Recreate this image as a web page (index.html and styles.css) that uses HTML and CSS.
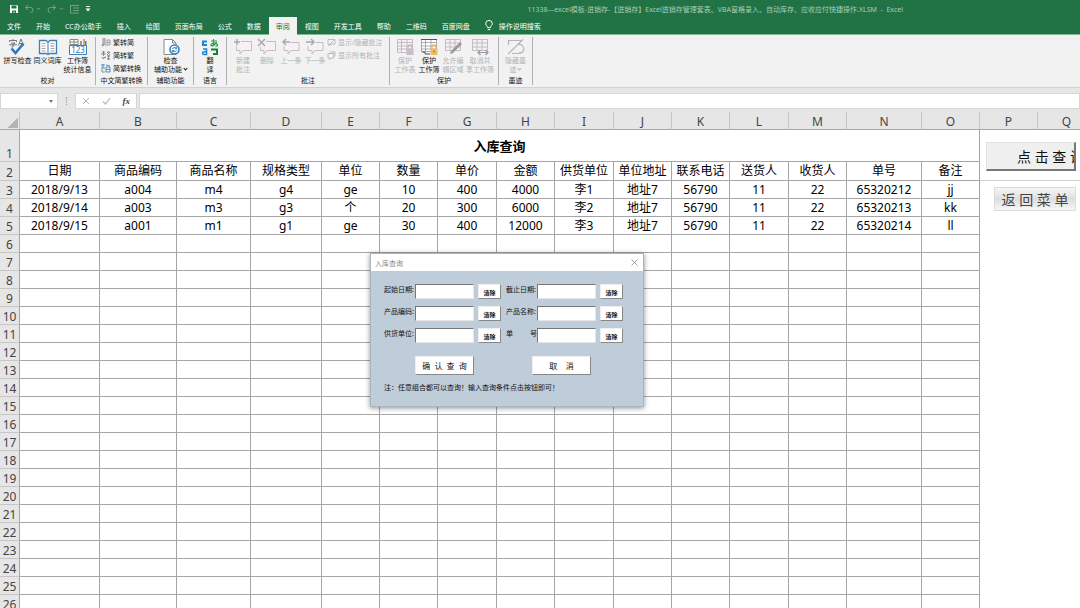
FILE: index.html
```html
<!DOCTYPE html>
<html lang="zh-CN">
<head>
    <meta charset="utf-8">
    <link rel="stylesheet" href="styles.css">
    <title>入库查询 - Excel</title>
</head>
<body>

    <header class="titlebar">
      <div class="quick">
        <button aria-label="保存"><svg width="10" height="10" viewBox="0 0 10 10"><path d="M1 1h7l1 1v7H1z" fill="#fff"/><path d="M2.5 1.5h5v3h-5zM3 6.5h4V9H5.500V7.500H4.500V9H3z" fill="#217346"/></svg></button>
        <button class="faded" aria-label="撤消"><svg width="18" height="10" viewBox="0 0 18 10"><path d="M4 1L1.500 3.500 4 6M1.500 3.500h5a2.500 2.500 0 0 1 0 5M13 4l1.500 1.500L16 4" fill="none" stroke="#fff"/></svg></button>
        <button class="faded" aria-label="恢复"><svg width="18" height="10" viewBox="0 0 18 10"><path d="M6 1l2.500 2.500L6 6M8.500 3.500h-5a2.500 2.500 0 0 0 0 5M13 4l1.500 1.500L16 4" fill="none" stroke="#fff"/></svg></button>
        <button class="faded" aria-label="窗体"><svg width="10" height="10" viewBox="0 0 10 10"><path d="M0 1.500h9M3 4h6M3 6.500h6M0 9h9M.5 1v8" fill="none" stroke="#fff"/></svg></button>
        <button aria-label="自定义快速访问工具栏"><svg width="6" height="8" viewBox="0 0 6 8"><path d="M1 1.500h4" stroke="#fff"/><path d="M.5 3.500h5L3 6.500z" fill="#fff"/></svg></button>
      </div>
      <div class="filename">11338---excel模板-进销存-【进销存】Excel进销存管理套表、VBA窗格录入、自动库存、应收应付快捷操作.XLSM&nbsp; -&nbsp; Excel</div>
    </header>

    <nav class="tabs">
      <button class="tab file">文件</button>
      <button class="tab">开始</button>
      <button class="tab">CC办公助手</button>
      <button class="tab">插入</button>
      <button class="tab">绘图</button>
      <button class="tab">页面布局</button>
      <button class="tab">公式</button>
      <button class="tab">数据</button>
      <button class="tab active">审阅</button>
      <button class="tab">视图</button>
      <button class="tab">开发工具</button>
      <button class="tab">帮助</button>
      <button class="tab">二维码</button>
      <button class="tab">百度网盘</button>
      <button class="tab tell">
        <svg width="8" height="11" viewBox="0 0 8 11"><path d="M2.500 7.500C2.500 6 .7 5.500.7 3.700a3.300 3.300 0 0 1 6.600 0C7.300 5.500 5.500 6 5.500 7.500zM2.700 9.500h2.600" fill="none" stroke="#fff"/></svg>
        操作说明搜索
      </button>
    </nav>

    <section class="ribbon">
      <div class="group proofing">
        <div class="tools">
          <button class="tool">
            <svg width="20" height="18" viewBox="0 0 20 18"><path d="M1.500 4V2.500h7V4M5 1v1M3 5h4L5 6.500V9H3.500M1 6.800h8M10.500 7.500L13 1l2.500 6.500M11.500 5.500h3" fill="none" stroke="#666" stroke-width=".9"/><path d="M3.500 10.500l4 4.500 8-9.500" fill="none" stroke="#2f78b9" stroke-width="2.600"/></svg>
            拼写检查
          </button>
          <button class="tool">
            <svg width="20" height="18" viewBox="0 0 20 18"><path d="M1.500 2.500H8l2 1.500 2-1.500h6.500v13H12l-2 1-2-1H1.500z" fill="#fff" stroke="#3c7fba" stroke-width="1.300"/><path d="M10 4v12" stroke="#3c7fba"/><path d="M3.500 5.500h4M3.500 8h4M3.500 10.500h4M3.500 13h4M12.500 5.500h4M12.500 8h4M12.500 10.500h4M12.500 13h4" stroke="#aaa"/><path d="M12.500 8h3" stroke="#e3a28c"/></svg>
            同义词库
          </button>
          <button class="tool">
            <svg width="20" height="18" viewBox="0 0 20 18"><path d="M2 1.500h8v5H2zM2 4h8M6 1.500v5" fill="#fff" stroke="#888"/><path d="M12 3h2v4h-2z" fill="#999"/><path d="M15 1h2v6h-2z" fill="#e3a45d"/><path d="M17 3h1.500v4H17z" fill="#3c7fba"/><path d="M1.500 7.500h17v9h-17z" fill="#fff" stroke="#3c7fba"/><text x="10" y="15" text-anchor="middle" class="icon-text">123</text></svg>
            工作簿<br>统计信息
          </button>
        </div>
        <div class="group-name">校对</div>
      </div>

      <div class="group chinese">
        <div class="lines">
          <button class="line"><svg width="10" height="9" viewBox="0 0 10 9"><path d="M1 1h4M1 3h4M3 0v7M1 5h4M1 8l1-2M5 8L4 6M6 2h3v5H6zM6 4.500h3" fill="none" stroke="#888" stroke-width=".8"/><path d="M1 8l2-1.500" stroke="#2f78b9"/></svg>繁转简</button>
          <button class="line"><svg width="10" height="9" viewBox="0 0 10 9"><path d="M1 1h3M0 3h5M2.500 0v5M6 1h3L6 4M6 1l3 3M6 5h3M7.500 4v4" fill="none" stroke="#777" stroke-width=".8"/><path d="M1 6l1 1.500L5 6M6 8h3" fill="none" stroke="#2f78b9"/></svg>简转繁</button>
          <button class="line"><svg width="10" height="9" viewBox="0 0 10 9"><path d="M0 1h4M2 0v4M0 4h4M5 3h4v5H5zM5 5.500h4M5 1l4 1" fill="none" stroke="#2f78b9" stroke-width=".8"/><path d="M1 5v3h3" fill="none" stroke="#888"/></svg>简繁转换</button>
        </div>
        <div class="group-name">中文简繁转换</div>
      </div>

      <div class="group access">
        <div class="tools">
          <button class="tool">
            <svg width="20" height="18" viewBox="0 0 20 18"><path d="M3 1.500h8.500L15 5v11.500H3z" fill="#fff" stroke="#888"/><path d="M11.500 1.500V5H15" fill="none" stroke="#888"/><circle cx="13.500" cy="11.500" r="4.500" fill="#fff" stroke="#3c7fba" stroke-width="1.600"/><path d="M11.500 11a2.200 2.200 0 0 1 4-.5M15.500 12.300a2.200 2.200 0 0 1-4 .3M15.700 8.800v2h-2M11.300 14.500v-2h2" fill="none" stroke="#3c7fba"/></svg>
            检查<br>辅助功能 <span class="caret"></span>
          </button>
        </div>
        <div class="group-name">辅助功能</div>
      </div>

      <div class="group language">
        <div class="tools">
          <button class="tool">
            <svg width="20" height="18" viewBox="0 0 20 18"><path d="M7 3.500H3v3.500h4" fill="none" stroke="#1e88d0" stroke-width="2"/><path d="M11 3h6M13.500 1v6.500M16.500 4c-1 3-5 5-5.500 3S18 4 17.500 7.500L15.500 8.500" fill="none" stroke="#22a33b" stroke-width="1.200"/><path d="M3 11h3.500v5.500H4a1.400 1.400 0 0 1 0-2.800h2.500" fill="none" stroke="#1e88d0" stroke-width="1.600"/><path d="M11 11.500h6V16h-4" fill="none" stroke="#15803a" stroke-width="2"/></svg>
            翻<br>译
          </button>
        </div>
        <div class="group-name">语言</div>
      </div>

      <div class="group comments">
        <div class="tools">
          <button class="tool" disabled>
            <svg width="20" height="18" viewBox="0 0 20 18"><path d="M8 3.500h10.500v9H10L7 16v-3.500H3.500V8" fill="#f7f0f7" stroke="#c4bcc4"/><path d="M1 4h6M4 1v6" stroke="#aaa" stroke-width="1.500"/></svg>
            新建<br>批注
          </button>
          <button class="tool" disabled>
            <svg width="20" height="18" viewBox="0 0 20 18"><path d="M9 3.500h9.500v9H10L7 16v-3.500H3.500V9" fill="#f7f0f7" stroke="#c4bcc4"/><path d="M1 1l7 7M8 1L1 8" stroke="#aaa" stroke-width="1.500"/></svg>
            删除
          </button>
          <button class="tool" disabled>
            <svg width="20" height="18" viewBox="0 0 20 18"><path d="M9.500 4.500h8.500v8H10L7 16v-3.500H3V8" fill="#f7f0f7" stroke="#c4bcc4"/><path d="M9 4H2M5 1L2 4l3 3" fill="none" stroke="#aaa" stroke-width="1.500"/></svg>
            上一条
          </button>
          <button class="tool" disabled>
            <svg width="20" height="18" viewBox="0 0 20 18"><path d="M10.500 4.500H18v8h-8L7 16v-3.500H3V8" fill="#f7f0f7" stroke="#c4bcc4"/><path d="M1 4h8M6 1l3 3-3 3" fill="none" stroke="#aaa" stroke-width="1.500"/></svg>
            下一条
          </button>
          <div class="lines">
            <button class="line" disabled><svg width="9" height="9" viewBox="0 0 9 9"><path d="M1 1.500h7V6H4L2 8V6H1zM2 7l5-5" fill="none" stroke="#bbb"/></svg>显示/隐藏批注</button>
            <button class="line" disabled><svg width="9" height="9" viewBox="0 0 9 9"><path d="M1 2.500h5.500V7H4L2.500 8.500V7H1zM3 1h5v4.500" fill="none" stroke="#bbb"/></svg>显示所有批注</button>
          </div>
        </div>
        <div class="group-name">批注</div>
      </div>

      <div class="group protect">
        <div class="tools">
          <button class="tool" disabled>
            <svg width="20" height="18" viewBox="0 0 20 18"><path d="M2.500 1.500h15v13h-15zM2.500 4.500h15M2.500 8h15M2.500 11h15M6.500 1.500v13M12 1.500v13" fill="#f7f0f7" stroke="#c4bcc4"/><path d="M13 11V9a2 2 0 0 1 4 0v2" fill="none" stroke="#bbb" stroke-width="1.300"/><path d="M11.500 10.500h7V17h-7z" fill="#c4c0c4"/></svg>
            保护<br>工作表
          </button>
          <button class="tool">
            <svg width="20" height="18" viewBox="0 0 20 18"><path d="M2.500 1.500h15v12h-15zM2.500 4.500h15M2.500 8h15M2.500 11h15M6.500 1.500v12M12 1.500v12" fill="#fff" stroke="#aaa"/><path d="M2 1.500h16M3 14h3v2h5" fill="none" stroke="#555"/><path d="M13 11V9a2 2 0 0 1 4 0v2" fill="none" stroke="#e8b461" stroke-width="1.300"/><path d="M11.500 10.500h7V17h-7z" fill="#efbc68"/><path d="M15 12v3" stroke="#a87b35"/></svg>
            保护<br>工作簿
          </button>
          <button class="tool" disabled>
            <svg width="20" height="18" viewBox="0 0 20 18"><path d="M2.500 1.500h15v11h-15zM2.500 5h15M2.500 9h15M7 1.500v11M12 1.500v11" fill="#f7f0f7" stroke="#c4bcc4"/><path d="M7 16l1-3 9-9 2 2-9 9z" fill="#999"/></svg>
            允许编<br>辑区域
          </button>
          <button class="tool wide" disabled>
            <svg width="20" height="18" viewBox="0 0 20 18"><path d="M2.500 1.500h15v11h-15zM2.500 5h15M2.500 9h15M7 1.500v11M12 1.500v11" fill="#f7f0f7" stroke="#c4bcc4"/><path d="M8 14.500h10M10.500 12L8 14.500l2.500 2.500M15.500 12l2.500 2.500-2.500 2.500" fill="none" stroke="#999" stroke-width="1.200"/></svg>
            取消共<br>享工作簿
          </button>
        </div>
        <div class="group-name">保护</div>
      </div>

      <div class="group ink">
        <div class="tools">
          <button class="tool" disabled>
            <svg width="20" height="18" viewBox="0 0 20 18"><path d="M2.500 7V2.500H16M2 16L17 1.500M6 15.500h6c5 0 7-4 5-7-1-2-3-2.500-5-2" fill="none" stroke="#b8b4b8" stroke-width="1.200"/></svg>
            隐藏墨<br>迹 <span class="caret"></span>
          </button>
        </div>
        <div class="group-name">墨迹</div>
      </div>
    </section>

    <div class="formula-bar">
      <div class="name-box"><input type="text" aria-label="名称框"><span class="arrow"></span></div>
      <span class="dots"></span>
      <div class="fx">
        <button aria-label="取消"><svg width="8" height="8" viewBox="0 0 8 8"><path d="M1 1l6 6M7 1L1 7" stroke="#b5b5b5"/></svg></button>
        <button aria-label="输入"><svg width="9" height="8" viewBox="0 0 9 8"><path d="M1 4.500L3.500 7 8 1" fill="none" stroke="#b5b5b5" stroke-width="1.200"/></svg></button>
        <button class="fx-label" aria-label="插入函数">fx</button>
      </div>
      <input class="formula" type="text" aria-label="编辑栏">
    </div>

    <main class="workbook">
      <table class="sheet">
        <colgroup>
          <col class="c-num"><col class="c-date"><col class="c-code"><col class="c-name"><col class="c-spec">
          <col class="c"><col class="c"><col class="c-wide"><col class="c"><col class="c-wide"><col class="c"><col class="c"><col class="c-wide"><col class="c">
          <col class="c-no"><col class="c"><col class="c"><col class="c">
        </colgroup>
        <thead>
          <tr><th class="corner"></th><th>A</th><th>B</th><th>C</th><th>D</th><th>E</th><th>F</th><th>G</th><th>H</th><th>I</th><th>J</th><th>K</th><th>L</th><th>M</th><th>N</th><th>O</th><th>P</th><th>Q</th></tr>
        </thead>
        <tbody id="rows">
          <tr class="title-row"><th>1</th><td colspan="15">入库查询</td><td class="out" colspan="2"></td></tr>
          <tr class="head-row"><th>2</th><td>日期</td><td>商品编码</td><td>商品名称</td><td>规格类型</td><td>单位</td><td>数量</td><td>单价</td><td>金额</td><td>供货单位</td><td>单位地址</td><td>联系电话</td><td>送货人</td><td>收货人</td><td>单号</td><td>备注</td><td class="out line-under" colspan="2"></td></tr>
          <tr><th>3</th><td>2018/9/13</td><td>a004</td><td>m4</td><td>g4</td><td>ge</td><td>10</td><td>400</td><td>4000</td><td>李1</td><td>地址7</td><td>56790</td><td>11</td><td>22</td><td>65320212</td><td>jj</td><td class="out" colspan="2"></td></tr>
          <tr><th>4</th><td>2018/9/14</td><td>a003</td><td>m3</td><td>g3</td><td>个</td><td>20</td><td>300</td><td>6000</td><td>李2</td><td>地址7</td><td>56790</td><td>11</td><td>22</td><td>65320213</td><td>kk</td><td class="out" colspan="2"></td></tr>
          <tr><th>5</th><td>2018/9/15</td><td>a001</td><td>m1</td><td>g1</td><td>ge</td><td>30</td><td>400</td><td>12000</td><td>李3</td><td>地址7</td><td>56790</td><td>11</td><td>22</td><td>65320214</td><td>ll</td><td class="out" colspan="2"></td></tr>
        </tbody>
      </table>

      <button class="sheet-btn query">点 击 查 询</button>
      <button class="sheet-btn back">返 回 菜 单</button>

      <form class="dialog" onsubmit="return false">
        <div class="dialog-title">
          <span>入库查询</span>
          <button type="button" aria-label="关闭"><svg width="7" height="7" viewBox="0 0 7 7"><path d="M.5.5l6 6M6.500.5l-6 6" stroke="#888" stroke-width=".8"/></svg></button>
        </div>
        <div class="dialog-body">
          <div class="fields">
            <div class="field"><label for="from">起始日期:</label><input id="from" type="text"><button type="button">清除</button></div>
            <div class="field"><label for="to">截止日期:</label><input id="to" type="text"><button type="button">清除</button></div>
            <div class="field"><label for="code">产品编码:</label><input id="code" type="text"><button type="button">清除</button></div>
            <div class="field"><label for="name">产品名称:</label><input id="name" type="text"><button type="button">清除</button></div>
            <div class="field"><label for="supplier">供货单位:</label><input id="supplier" type="text"><button type="button">清除</button></div>
            <div class="field"><label class="spread" for="number"><span>单</span><span>号</span></label><input id="number" type="text"><button type="button">清除</button></div>
          </div>
          <div class="actions">
            <button type="submit">确&nbsp; 认&nbsp; 查&nbsp; 询</button>
            <button type="button">取&nbsp;&nbsp;&nbsp; 消</button>
          </div>
          <p class="note">注：任意组合都可以查询！输入查询条件点击按钮即可！</p>
        </div>
      </form>
    </main>

    <script>
      // empty rows under the data
      const rows = document.getElementById("rows");
      for (let n = 6; n <= 26; n++) {
        const tr = document.createElement("tr");
        tr.innerHTML = "<th>" + n + "</th>" + "<td></td>".repeat(15) + '<td class="out" colspan="2"></td>';
        rows.appendChild(tr);
      }
    </script>

</body>
</html>
```
FILE: styles.css
```css
:root {
  --green: #217346;
  --grid: #a6a6a6;
  --chrome: #e6e6e6;
}

* {
  box-sizing: border-box;
  margin: 0;
  padding: 0;
}

html, body {
  height: 100%;
}

body {
  background: #fff;
  color: #111;
  display: flex;
  flex-direction: column;
  font-family: "Noto Sans", "Noto Sans CJK SC", sans-serif;
  font-size: 7px;
  overflow: hidden;
}

button, input {
  background: none;
  border: 0;
  color: inherit;
  font: inherit;
}

svg {
  display: block;
}

/* title bar and tabs */
.titlebar {
  align-items: center;
  background: var(--green);
  display: flex;
  flex: none;
  height: 17px;
  justify-content: space-between;
  padding: 0 177px 0 9px;
}

.quick {
  align-items: center;
  display: flex;
  gap: 5px;
}

.quick .faded {
  opacity: .35;
}

.filename {
  color: #a5cbb5;
}

.tabs {
  background: var(--green);
  border-bottom: 1px solid #86b79b;
  color: #fff;
  display: flex;
  flex: none;
  gap: 1px;
  height: 18px;
}

.tab {
  padding: 0 7px;
  white-space: nowrap;
}

.tab.active {
  background: #f2f2f2;
  color: var(--green);
  margin-bottom: -1px;
}

.tab.tell {
  align-items: center;
  display: flex;
  gap: 6px;
}

/* ribbon */
.ribbon {
  background: #f2f2f2;
  border-bottom: 1px solid #d2d2d2;
  display: flex;
  flex: none;
  height: 53px;
  padding: 2px 0;
}

.group {
  border-right: 1px solid #b0b0b0;
  display: flex;
  flex: none;
  flex-direction: column;
  justify-content: space-between;
  line-height: 9px;
}

.proofing { width: 96px; }
.chinese { width: 52px; }
.access { width: 46px; }
.language { width: 33px; }
.comments { width: 163px; }
.protect { width: 109px; }
.ink { width: 34px; }

.tools {
  display: flex;
  justify-content: center;
}

.comments .tools {
  justify-content: flex-start;
  padding-left: 4px;
}

.tool {
  align-self: flex-start;
  padding-top: 1px;
  white-space: nowrap;
  width: 24px;
}

.tool svg {
  margin: 0 auto;
}

.proofing .tool {
  width: 30px;
}

.access .tool,
.language .tool,
.ink .tool {
  width: 100%;
}

.tool.wide {
  width: 30px;
}

.tool:disabled,
.line:disabled {
  color: #b3b3b3;
}

.icon-text {
  fill: #2f78b9;
  font-size: 8px;
}

.lines {
  display: flex;
  flex-direction: column;
  gap: 4px;
  padding-top: 1px;
}

.chinese .lines {
  padding-left: 5px;
}

.line {
  align-items: center;
  display: flex;
  gap: 2px;
  white-space: nowrap;
}

.group-name {
  text-align: center;
  white-space: nowrap;
}

.caret {
  border: solid currentColor;
  border-width: 0 1px 1px 0;
  display: inline-block;
  height: 3px;
  transform: rotate(45deg);
  vertical-align: 2px;
  width: 3px;
}

/* formula bar */
.formula-bar {
  background: var(--chrome);
  display: flex;
  flex: none;
  height: 24px;
  padding: 5px 0 3px;
}

.name-box {
  align-items: center;
  background: #fff;
  border: 1px solid #d6d6d6;
  display: flex;
  padding-right: 4px;
  width: 58px;
}

.name-box input {
  flex: 1;
  min-width: 0;
}

.arrow {
  border: 2px solid transparent;
  border-bottom: 0;
  border-top: 3px solid #777;
}

.dots {
  border-left: 1px dotted #999;
  margin: 4px 8px;
}

.fx {
  align-items: center;
  background: #fff;
  border: 1px solid #d6d6d6;
  display: flex;
  justify-content: space-around;
  margin-right: 2px;
  width: 62px;
}

.fx-label {
  color: #444;
  font: italic bold 9px "Liberation Serif", serif;
}

.formula {
  background: #fff;
  border: 1px solid #d6d6d6;
  flex: 1;
}

/* worksheet */
.workbook {
  flex: 1;
  min-height: 0;
  overflow: hidden;
  position: relative;
}

.sheet {
  border-collapse: separate;
  border-spacing: 0;
  font-size: 12px;
  line-height: 16px;
  table-layout: fixed;
  width: 1095px;
}

.c { width: 58px; }
.c-wide { width: 59px; }
.c-num { width: 20px; }
.c-date { width: 80px; }
.c-code { width: 77px; }
.c-name { width: 74px; }
.c-spec { width: 71px; }
.c-no { width: 75px; }

.sheet th {
  background: var(--chrome);
  border-bottom: 1px solid #c6c6c6;
  border-right: 1px solid var(--grid);
  color: #444;
  font-weight: normal;
  line-height: 14px;
  padding-top: 3px;
  vertical-align: bottom;
}

.sheet thead th {
  border-bottom-color: var(--grid);
  border-right-color: #c6c6c6;
  height: 18px;
}

.sheet .corner {
  background: linear-gradient(135deg, transparent 50%, #b4b4b4 50%) 7px 5px / 11px 11px no-repeat var(--chrome);
}

.sheet td {
  border-bottom: 1px solid var(--grid);
  border-right: 1px solid var(--grid);
  color: #000;
  height: 18px;
  text-align: center;
  white-space: nowrap;
}

.sheet .title-row td {
  font-size: 13px;
  font-weight: bold;
  height: 32px;
}

.sheet .head-row td {
  height: 19px;
}

.sheet td.out {
  border: 0;
}

.sheet td.line-under {
  border-bottom: 1px solid #d0d0d0;
}

/* buttons floating over the cells */
.sheet-btn {
  font-size: 14px;
  overflow: hidden;
  position: absolute;
  white-space: nowrap;
}

.query {
  background: #efefef;
  border: 1px solid #e2e2e2;
  border-bottom: 2px solid #777;
  border-right: 2px solid #777;
  color: #111;
  height: 29px;
  left: 986px;
  padding-left: 30px;
  text-align: left;
  top: 30px;
  width: 90px;
}

.back {
  background: linear-gradient(#f6f6f6, #dedede 50%, #f6f6f6);
  border: 1px solid #dcdcdc;
  color: #444;
  height: 24px;
  left: 994px;
  top: 75px;
  width: 82px;
}

/* query dialog */
.dialog {
  background: #bfccda;
  border: 1px solid #aab4be;
  box-shadow: 0 1px 5px rgba(0, 0, 0, .45);
  left: 370px;
  position: absolute;
  top: 141px;
  width: 274px;
}

.dialog-title {
  align-items: center;
  background: #fff;
  color: #888;
  display: flex;
  height: 17px;
  justify-content: space-between;
  padding: 0 5px 0 4px;
}

.dialog-body {
  padding: 13px 21px 13px 13px;
}

.fields {
  display: grid;
  gap: 7px 5px;
  grid-template-columns: auto auto;
  justify-content: start;
}

.field {
  display: flex;
  height: 15px;
}

.field label {
  line-height: 12px;
  white-space: nowrap;
  width: 31px;
}

.field .spread {
  display: flex;
  justify-content: space-between;
}

.field input {
  background: #fff;
  border: 1px solid #e6e6e6;
  border-left: 1px solid #777;
  border-top: 1px solid #777;
  margin-right: 4px;
  width: 59px;
}

.dialog-body button {
  background: #fff;
  border: 1px solid #eee;
  border-bottom-color: #888;
  border-right-color: #888;
}

.field button {
  font-size: 6px;
  font-weight: bold;
  line-height: 8px;
  padding-top: 3px;
  width: 23px;
}

.actions {
  display: flex;
  gap: 58px;
  padding: 13px 0 0 31px;
}

.actions button {
  font-size: 8px;
  height: 19px;
  width: 59px;
}

.note {
  line-height: 10px;
  padding-top: 8px;
  white-space: nowrap;
}
```
